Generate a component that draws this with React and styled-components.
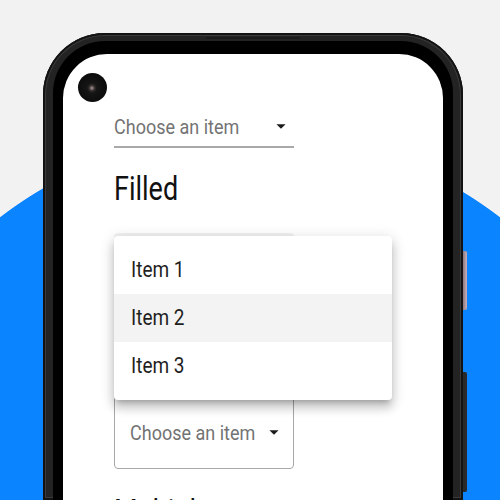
import React from "react";
import styled, { createGlobalStyle, css } from "styled-components";

const GlobalStyle = createGlobalStyle`
  html, body {
    margin: 0;
    padding: 0;
    width: 500px;
    height: 500px;
    overflow: hidden;
  }
  body {
    background: radial-gradient(circle 411px at 250px 543px, #0a84ff 99.8%, #f2f2f2 100%);
    font-family: Roboto, "Noto Sans", Arial, sans-serif;
  }
`;

const tall = css`
  display: inline-block;
  transform: scaleY(1.15);
`;

const Page = styled.div`
  box-sizing: border-box;
  width: 500px;
  height: 500px;
  padding: 33px 0 0 43px;
`;

const Frame = styled.div`
  position: relative;
  box-sizing: border-box;
  width: 420px;
  height: 467px;
  display: flex;
  flex-direction: column;
  padding: 4px 10px 0;
  background: #232323;
  border-radius: 62px 62px 0 0;
  box-shadow: inset 0 0 0 2px #131313, inset 0 0 0 3px #3a3a3a;
`;

const Speaker = styled.div`
  width: 92px;
  height: 5px;
  margin: 0 auto 2px;
  border-radius: 3px;
  border: 0.5px solid #1a1a1a;
  background: repeating-linear-gradient(90deg, #5a5a5a 0 1px, #2e2e2e 1px 3px);
`;

const SideButton = styled.div`
  position: absolute;
  left: 420px;
  width: 4px;
  top: ${(p) => p.$top}px;
  height: ${(p) => p.$h}px;
  background: ${(p) => p.$color};
  border-radius: 0 2px 2px 0;
`;

const Bezel = styled.div`
  flex: 1;
  display: flex;
  flex-direction: column;
  background: #000;
  border-radius: 52px 52px 0 0;
  padding: 13px 10px 0;
`;

const Screen = styled.div`
  position: relative;
  flex: 1;
  overflow: hidden;
  background: #fff;
  border-radius: 44px 44px 0 0;
  padding: 52px 0 0 51px;
`;

const Camera = styled.div`
  position: absolute;
  left: 15px;
  top: 19px;
  width: 29px;
  height: 29px;
  border-radius: 50%;
  background: radial-gradient(circle at 48% 52%, #8a7a78 0 1.2px, #3a3433 2.4px, #151515 5px, #0c0c0c 14.5px);
`;

const Column = styled.div`
  display: flex;
  flex-direction: column;
  align-items: flex-start;
`;

const Placeholder = styled.span`
  ${tall};
  font-size: 18px;
  line-height: 21px;
  color: #737373;
  white-space: nowrap;
`;

const ArrowIcon = ({ className }) => (
  <svg className={className} width="22" height="22" viewBox="0 0 24 24" aria-hidden="true">
    <path d="M7 10l5 5 5-5z" fill="#1b1b1b" />
  </svg>
);

const Arrow = styled(ArrowIcon)`
  flex: none;
  display: block;
`;

const UnderlineSelect = styled.div`
  width: 178px;
  height: 40px;
  display: flex;
  align-items: center;
  justify-content: space-between;
  padding-right: 2px;
  border-bottom: 2px solid #a9a9a9;
`;

const Heading = styled.h2`
  display: inline-block;
  transform: scaleY(1.2);
  margin: ${(p) => p.$top ?? 21}px 0 ${(p) => p.$bottom ?? 24}px;
  font-size: 27px;
  line-height: 40px;
  font-weight: 400;
  color: #111;
  white-space: nowrap;
  visibility: ${(p) => (p.$covered ? "hidden" : "visible")};
`;

const FilledSelect = styled.div`
  width: 180px;
  height: 78px;
  background: #f1f1f1;
  border-radius: 4px 4px 0 0;
  border-bottom: 1px solid #9e9e9e;
`;

const OutlinedSelect = styled.div`
  box-sizing: border-box;
  width: 180px;
  height: 74px;
  display: flex;
  align-items: center;
  justify-content: space-between;
  padding: 0 8px 0 15px;
  border: 1px solid #a8a8a8;
  border-radius: 4px;
`;

const Menu = styled.ul`
  position: absolute;
  left: 51px;
  top: 182px;
  width: 278px;
  margin: 0;
  padding: 10px 0;
  list-style: none;
  background: #fff;
  border-radius: 4px;
  box-shadow: 0 5px 5px -3px rgba(0, 0, 0, 0.2), 0 8px 10px 1px rgba(0, 0, 0, 0.14),
    0 3px 14px 2px rgba(0, 0, 0, 0.12);
`;

const MenuItem = styled.li`
  height: 48px;
  display: flex;
  align-items: center;
  padding-left: 17px;
  background: ${(p) => (p.$active ? "#f3f3f3" : "transparent")};
`;

const ItemText = styled.span`
  ${tall};
  font-size: 19px;
  line-height: 22px;
  color: #1f1f1f;
`;

export default function App() {
  return (
    <>
      <GlobalStyle />
      <Page>
        <Frame>
          <Speaker />
          <SideButton $top={218} $h={59} $color="linear-gradient(90deg, #8c7a80, #cbb0b8)" />
          <SideButton $top={339} $h={120} $color="#2a2a2a" />
          <Bezel>
            <Screen>
              <Camera />
              <Column>
                <UnderlineSelect>
                  <Placeholder>Choose an item</Placeholder>
                  <Arrow />
                </UnderlineSelect>
                <Heading>Filled</Heading>
                <FilledSelect />
                <Heading $covered $bottom={22}>Outlined</Heading>
                <OutlinedSelect>
                  <Placeholder>Choose an item</Placeholder>
                  <Arrow />
                </OutlinedSelect>
                <Heading $top={23}>Multiple</Heading>
              </Column>
              <Menu>
                <MenuItem>
                  <ItemText>Item 1</ItemText>
                </MenuItem>
                <MenuItem $active>
                  <ItemText>Item 2</ItemText>
                </MenuItem>
                <MenuItem>
                  <ItemText>Item 3</ItemText>
                </MenuItem>
              </Menu>
            </Screen>
          </Bezel>
        </Frame>
      </Page>
    </>
  );
}
